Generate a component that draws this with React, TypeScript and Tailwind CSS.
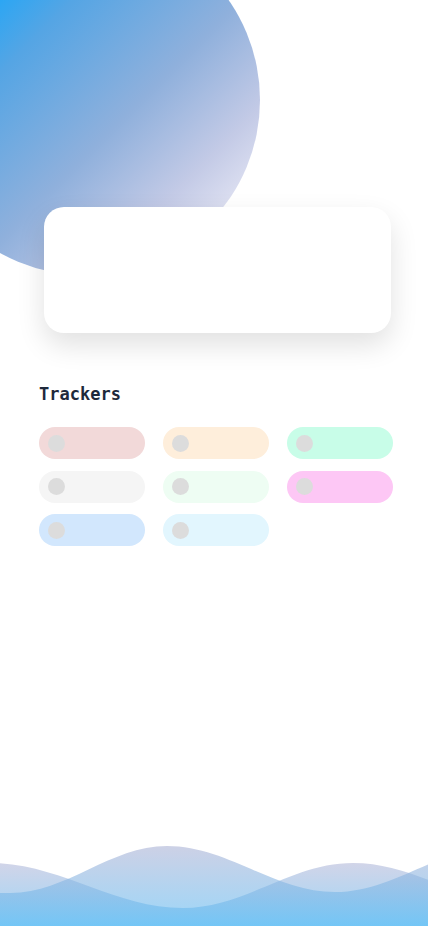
const trackers = [
  "bg-[#f2d9d9]",
  "bg-[#feeedb]",
  "bg-[#c8fde8]",
  "bg-[#f5f5f5]",
  "bg-[#eefdf3]",
  "bg-[#fdc7f5]",
  "bg-[#d2e7fd]",
  "bg-[#e2f6fe]",
];

function Waves() {
  return (
    <svg
      className="block mt-auto"
      width="428"
      height="80"
      viewBox="0 0 428 80"
      aria-hidden
    >
      <defs>
        <linearGradient id="waveP" x1="0" y1="0" x2="0" y2="1">
          <stop offset="0" stopColor="#b3b8d9" />
          <stop offset="1" stopColor="#59bbf4" />
        </linearGradient>
        <linearGradient id="waveQ" x1="0" y1="0" x2="0" y2="1">
          <stop offset="0" stopColor="#abb2d5" />
          <stop offset="1" stopColor="#59bbf4" />
        </linearGradient>
      </defs>
      <path
        d="M-10,17 C60,17 113,62 183,62 C245,62 291,17 353,17 C418,17 468,62 533,62 L533,80 L-10,80 Z"
        fill="url(#waveP)"
        opacity="0.6"
      />
      <path
        d="M0,47 L10,47 C67,47 110,0 167,0 C228,0 274,46 335,46 C395,46 440,0 500,0 L500,80 L0,80 Z"
        fill="url(#waveQ)"
        opacity="0.6"
      />
    </svg>
  );
}

export default function App() {
  return (
    <div className="relative min-h-[926px] w-full overflow-hidden bg-white flex flex-col">
      {/* background blob */}
      <div className="absolute left-[-90px] top-[-75px] w-[350px] h-[350px] rounded-full bg-[linear-gradient(135deg,#0ea7ff_16%,#55a5e4_34%,#8fb0dc_58%,#c3cae6_76%,#f3f2fa_94%)]" />

      <div className="relative mt-[207px] ml-[44px] w-[347px] h-[126px] rounded-[20px] bg-white shadow-[0_12px_28px_rgba(0,0,0,0.12)]" />

      <h2 className="relative mt-[49px] ml-[39px] text-[17px] leading-[24px] font-bold text-[#1e293b] font-['DejaVu_Sans_Mono',monospace]">
        Trackers
      </h2>

      <div className="relative mt-[21px] ml-[39px] w-[354px] grid grid-cols-3 gap-x-[18px] gap-y-[11.5px]">
        {trackers.map((color, i) => (
          <div
            key={i}
            className={`h-[32px] rounded-full flex items-center ${color}`}
          >
            <span className="ml-[9px] w-[17px] h-[17px] rounded-full bg-[#dcdcdc]" />
          </div>
        ))}
      </div>

      <Waves />
    </div>
  );
}
